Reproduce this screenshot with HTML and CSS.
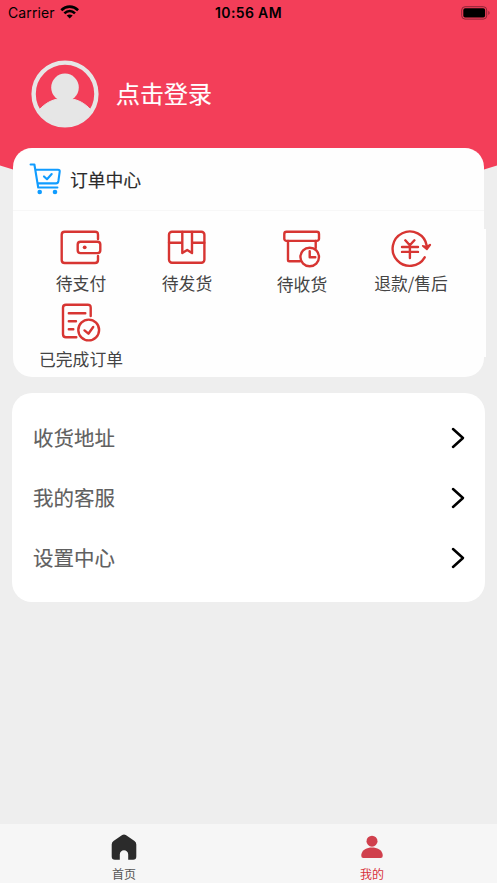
FILE: index.html
```html
<!DOCTYPE html>
<html lang="zh-CN">
<head>
<meta charset="utf-8">
<title>我的</title>
<link rel="stylesheet" href="styles.css">
</head>
<body>
<div class="app">
  <header class="header">
    <div class="status">
      <div class="carrier"><span>Carrier</span>
        <svg width="20" height="14" viewBox="0 0 20 14" fill="none" stroke="#000" stroke-width="2.6"><path d="M1.3 5.2C6.2.4 13.2.4 18.1 5.2M4.4 8.4C7.5 5.4 11.9 5.4 15 8.4"/><path d="M6.7 10.6Q9.7 8.3 12.7 10.6L9.7 13.5Z" fill="#000" stroke="none"/></svg>
      </div>
      <div class="time">10:56 AM</div>
      <svg class="battery" width="29" height="14" viewBox="0 0 29 14"><rect x=".7" y=".7" width="25" height="12.4" rx="3.4" fill="none" stroke="#8d2437" stroke-width="1"/><rect x="2.3" y="2.3" width="21.8" height="9.2" rx="1.8"/><path d="M27.4 4.8Q29.8 6.9 27.4 9Z" fill="#8d2437"/></svg>
    </div>
    <div class="profile">
      <svg width="68" height="68" viewBox="0 0 68 68"><circle cx="34" cy="34" r="31.4" fill="none" stroke="#e6e6e6" stroke-width="4.4"/><circle cx="34" cy="27.4" r="13.8" fill="#e6e6e6"/><path d="M8.5 49.5C14 43.5 21 39.5 28 39H40C47 39.5 54 43.5 59.5 49.5A30 30 0 0 1 8.5 49.5Z" fill="#e6e6e6" stroke="#e6e6e6"/></svg>
      <span>点击登录</span>
    </div>
  </header>

  <main>
    <section class="orders">
      <div class="orders-title">
        <svg width="36" height="36" viewBox="0 0 36 36" fill="none" stroke="#109cff" stroke-width="2.1" stroke-linecap="round" stroke-linejoin="round"><path d="M2.6 4.5H6.4L10.2 27.5H29.4M7.3 9.7H30Q32 9.7 31.7 11.7L30.4 21Q30 23.4 28 23.4H9.6M16 16.4L19 19.2L23.7 14"/><g fill="#109cff" stroke="none"><circle cx="11.7" cy="32" r="2.3"/><circle cx="27" cy="32" r="2.3"/></g></svg>
        <h2>订单中心</h2>
      </div>
      <div class="order-grid">
        <div class="order">
          <svg class="icon" viewBox="0 0 48 40"><path d="M41 11V6.7Q41 3.7 38 3.7H7.7Q4.7 3.7 4.7 6.7V32Q4.7 35 7.7 35H38Q41 35 41 32V28"/><rect x="20.7" y="13.7" width="22.6" height="11.4" rx="2.8"/><circle class="dot" cx="27.7" cy="19.3" r="1.9"/></svg>
          <span>待支付</span>
        </div>
        <div class="order">
          <svg class="icon" viewBox="0 0 48 40"><rect x="6" y="3.8" width="35.4" height="31" rx="3"/><path d="M6 14.7H19.3M29 14.7H41.3M19.3 4V25L24.2 22L29 25V4"/></svg>
          <span>待发货</span>
        </div>
        <div class="order">
          <svg class="icon" viewBox="0 0 48 40"><rect x="6.3" y="3.7" width="34.7" height="9.2" rx="2.2"/><path d="M10 13V32Q10 33.3 11.3 33.3H22M37.7 13V20M31.7 23.2V29.3H37.3"/><circle cx="31.7" cy="29" r="9.3"/></svg>
          <span class="low">待收货</span>
        </div>
        <div class="order">
          <svg class="icon" viewBox="0 0 48 40"><path d="M37.7 29.3A17.2 17.2 0 1 1 39.8 18M18.3 12.3L22.8 17.3L27.4 12.3M15 19H31M15 23.9H31M22.9 18V30"/><path class="dot" d="M35.2 17Q34.4 18 35.4 18.8L39.3 22.1Q40 22.6 40.5 22L44.1 17.2Q44.5 15.6 42.9 15.7L39.7 17.8Z"/></svg>
          <span>退款/售后</span>
        </div>
        <div class="order">
          <svg class="icon" viewBox="0 0 48 40"><path d="M33.7 14V5.7Q33.7 2.7 30.7 2.7H9Q6 2.7 6 5.7V32.3Q6 35.3 9 35.3H19.3M11.8 11.3H28.3M11.8 19.3H19M11.8 27.3H16.3M27.5 28.4L31.4 31.7L36.2 25"/><circle cx="31.7" cy="28" r="10.4"/></svg>
          <span class="lower">已完成订单</span>
        </div>
      </div>
    </section>

    <section class="menu">
      <div class="row"><span>收货地址</span><svg width="16" height="24" viewBox="0 0 16 24"><path d="M3 3L13 12L3 21"/></svg></div>
      <div class="row"><span>我的客服</span><svg width="16" height="24" viewBox="0 0 16 24"><path d="M3 3L13 12L3 21"/></svg></div>
      <div class="row"><span>设置中心</span><svg width="16" height="24" viewBox="0 0 16 24"><path d="M3 3L13 12L3 21"/></svg></div>
    </section>
  </main>

  <nav class="tabs">
    <div class="tab">
      <svg width="28" height="28" viewBox="0 0 28 28" fill="#2b2b2b"><path d="M12.2 1.1Q14 0 15.8 1.1L24.5 7.1Q26.3 8.4 26.3 10.5V22.5Q26.3 25.7 23.1 25.7H18.2V20.5A4.2 4.2 0 0 0 9.8 20.5V25.7H5Q1.7 25.7 1.7 22.5V10.5Q1.7 8.4 3.5 7.1Z"/></svg>
      <span>首页</span>
    </div>
    <div class="tab active">
      <svg width="28" height="28" viewBox="0 0 28 28" fill="#d0404d"><circle cx="14" cy="7.2" r="5.5"/><path d="M3.3 20.8C4 16 9 13.6 14 13.6S24 16 24.7 20.8V22Q24.7 24 22.7 24H5.3Q3.3 24 3.3 22Z"/></svg>
      <span>我的</span>
    </div>
  </nav>
</div>
</body>
</html>
```
FILE: styles.css
```css
* { box-sizing: border-box; }
body { margin: 0; background: #eee; font-family: "Noto Sans CJK SC", sans-serif; }
svg { display: block; flex: none; }
.app { width: 497px; height: 883px; display: flex; flex-direction: column; overflow: hidden; }

.header {
  height: 172px;
  flex: none;
  background: #f33e59;
  clip-path: polygon(0 0, 100% 0, 100% 165.5px, 484px 169.5px, 13px 169.5px, 0 165.5px);
}
.status {
  height: 26px;
  padding: 0 7px 0 8px;
  display: grid;
  grid-template-columns: 1fr auto 1fr;
  align-items: center;
  font-family: Inter, sans-serif;
  font-size: 14px;
  line-height: 26px;
}
.carrier { display: flex; align-items: center; gap: 5px; letter-spacing: .1px; }
.carrier svg { margin-top: -2px; }
.time { font-weight: 600; letter-spacing: .35px; margin-left: -1px; }
.battery { justify-self: end; margin-top: -1px; }
.profile { display: flex; align-items: center; gap: 17px; padding: 34px 0 0 31px; }
.profile span { color: #fff; font-size: 24px; line-height: 36px; margin-top: -2px; -webkit-text-stroke: .15px #fff; }

main { flex: 1; }
.orders {
  width: 471px;
  height: 229px;
  margin: -24px 0 0 13px;
  border-radius: 19px;
  background: #fefefe;
  position: relative;
}
.orders-title {
  height: 63px;
  padding: 0 15px;
  display: flex;
  align-items: center;
  gap: 6px;
  border-bottom: 1px solid #f7f7f7;
}
.orders-title svg { margin-top: -2px; }
h2 { margin: -1px 0 0; font-size: 17.8px; font-weight: 400; color: #2a2a2a; -webkit-text-stroke: .15px #2a2a2a; }
.order-grid {
  width: 473px;
  height: 128px;
  margin-top: 18px;
  padding-left: 14px;
  display: grid;
  grid-template-columns: 108px 104px 126px 92px;
  grid-template-rows: 74px 74px;
  background: #fefefe;
}
.order { display: flex; flex-direction: column; align-items: center; gap: 5px; margin-top: -1px; }
.order span { font-size: 16.8px; line-height: 20px; color: #444; white-space: nowrap; }
.order .low { margin-top: 1px; }
.order .lower { margin-top: 2px; }
.icon {
  width: 48px;
  height: 40px;
  fill: none;
  stroke: #d73532;
  stroke-width: 2.4;
  stroke-linecap: round;
  stroke-linejoin: round;
}
.dot { fill: #d73532; stroke: none; }

.menu {
  width: 473px;
  height: 209px;
  margin: 16px 0 0 12px;
  padding: 14px 19px 15px 21px;
  border-radius: 20px;
  background: #fff;
}
.row { height: 60px; display: flex; align-items: center; justify-content: space-between; }
.row span { font-size: 20.5px; color: #606060; -webkit-text-stroke: .12px #606060; }
.row svg { margin-top: 1px; }
.row path { fill: none; stroke: #000; stroke-width: 2.5; stroke-linecap: round; stroke-linejoin: round; }

.tabs { height: 59px; flex: none; display: flex; background: #f6f6f6; }
.tab {
  flex: 1;
  padding-top: 10px;
  display: flex;
  flex-direction: column;
  align-items: center;
  gap: 3px;
  font-size: 12px;
  line-height: 18px;
  color: #555;
}
.active { color: #d8323a; padding-right: 1px; }
```
